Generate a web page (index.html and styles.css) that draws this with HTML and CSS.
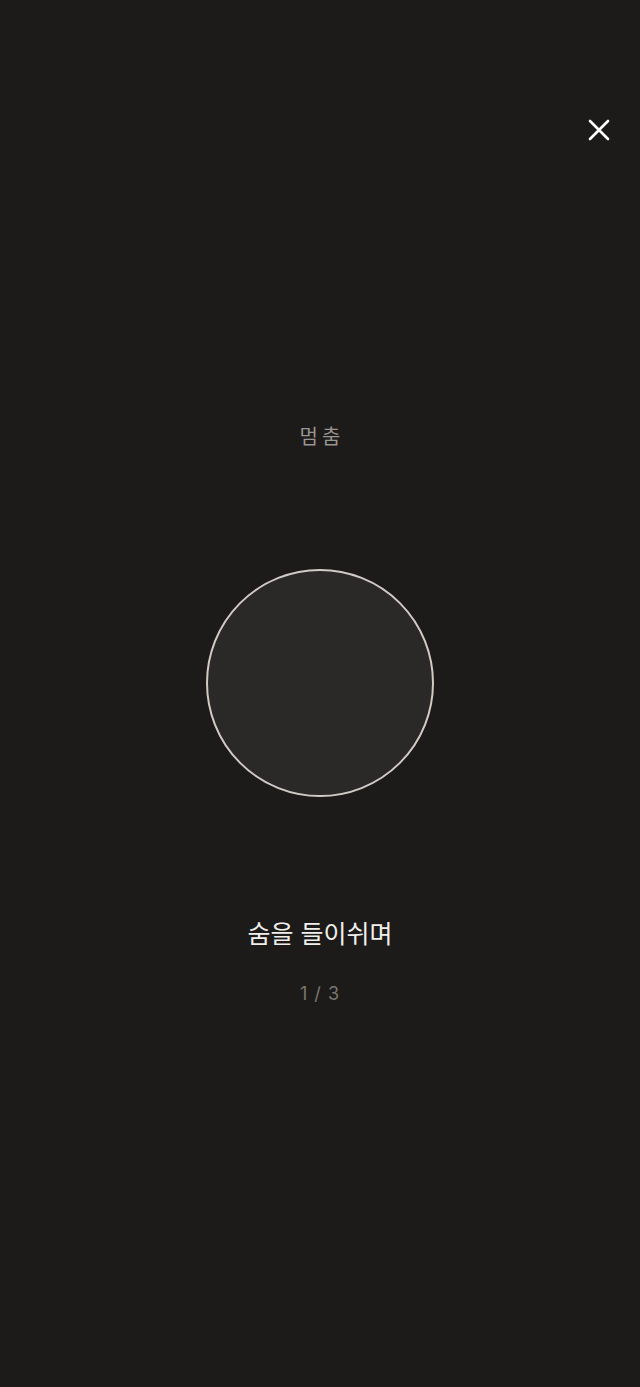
FILE: index.html
```html
<!DOCTYPE html>
<html lang="ko">
<head>
<meta charset="utf-8">
<title>호흡</title>
<link rel="stylesheet" href="styles.css">
</head>
<body>
<div class="screen">
  <header class="topbar">
    <button class="close" aria-label="닫기">
      <svg viewBox="0 0 24 24" width="24" height="24"><path d="M3 3L21 21M21 3L3 21" stroke="#ffffff" stroke-width="2.6" stroke-linecap="round" fill="none"/></svg>
    </button>
  </header>
  <main class="stage">
    <div class="state">멈춤</div>
    <div class="orb"></div>
    <div class="guide">숨을 들이쉬며</div>
    <div class="count">1 / 3</div>
  </main>
</div>
</body>
</html>
```
FILE: styles.css
```css
html, body {
  margin: 0;
  padding: 0;
  background: #1c1b1a;
}
body {
  font-family: "Noto Sans CJK KR", "Noto Sans", sans-serif;
}
.screen {
  height: 1387px;
  display: flex;
  flex-direction: column;
}
.topbar {
  display: flex;
  justify-content: flex-end;
  padding: 118px 29px 0 0;
}
.close {
  background: none;
  border: 0;
  padding: 0;
  width: 24px;
  height: 24px;
  display: block;
}
.close svg { display: block; }
.stage {
  display: flex;
  flex-direction: column;
  align-items: center;
}
.state {
  margin-top: 280px;
  font-size: 20px;
  line-height: 28px;
  letter-spacing: 4px;
  padding-left: 4px;
  color: #9a9590;
}
.orb {
  margin-top: 119px;
  width: 224px;
  height: 224px;
  border-radius: 50%;
  background: #2a2928;
  border: 2px solid #cfcbc6;
}
.guide {
  margin-top: 118px;
  font-size: 25px;
  line-height: 34px;
  color: #f2efeb;
}
.count {
  margin-top: 33px;
  font-family: Inter, "Noto Sans", sans-serif;
  font-size: 18px;
  line-height: 24px;
  color: #7a7671;
  letter-spacing: 1px;
}
```
